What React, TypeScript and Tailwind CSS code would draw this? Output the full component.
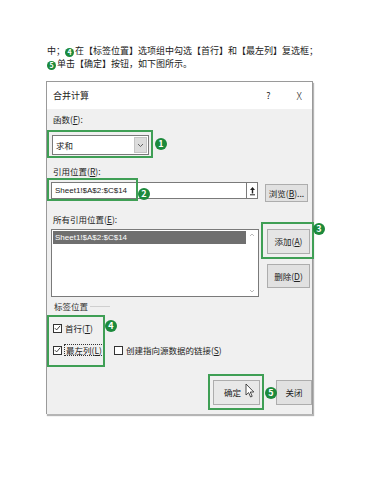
import React from "react";

const FONT = '"Noto Sans CJK SC", "Liberation Sans", sans-serif';

function Num({ n, className }: { n: string; className: string }) {
  return (
    <div
      className={`absolute w-[12px] h-[12px] rounded-full bg-[#1c8a3c] text-white text-[9px] font-bold leading-[12px] text-center ${className}`}
    >
      {n}
    </div>
  );
}

function InlineNum({ n }: { n: string }) {
  return (
    <span className="inline-block w-[9px] h-[9px] rounded-full bg-[#1c8a3c] text-white text-[7px] font-bold leading-[9px] text-center align-[-0.5px] mr-[1px]">
      {n}
    </span>
  );
}

function Check({ checked }: { checked: boolean }) {
  return (
    <div className="w-[9px] h-[9px] border border-[#333] bg-white flex items-center justify-center shrink-0">
      {checked && (
        <svg width="8" height="8" viewBox="0 0 8 8">
          <path d="M1 4.2 L3 6.2 L7 1.5" fill="none" stroke="#222" strokeWidth="1" />
        </svg>
      )}
    </div>
  );
}

function Btn({ children, className }: { children: React.ReactNode; className: string }) {
  return (
    <div
      className={`border border-[#adadad] bg-[#e1e1e1] flex items-center justify-center text-[8.5px] text-[#222] ${className}`}
    >
      {children}
    </div>
  );
}

export default function App() {
  return (
    <div className="w-[370px] h-[480px] bg-white overflow-hidden" style={{ fontFamily: FONT }}>
      <div className="pt-[44px] pl-[47px] text-[9px] leading-[13px] text-[#222] whitespace-nowrap">
        <div>
          中；<InlineNum n="4" />在【标签位置】选项组中勾选【首行】和【最左列】复选框；
        </div>
        <div>
          <InlineNum n="5" />单击【确定】按钮，如下图所示。
        </div>
      </div>

      <div className="relative mt-[11px] ml-[46px] w-[267px] h-[333px] border border-[#9a9a9a] shadow-[1px_2px_1px_#b5b5b5]">
        {/* title bar */}
        <div className="h-[27px] bg-white flex items-center pl-[6px] text-[9px] text-[#222]">
          <span>合并计算</span>
          <span className="ml-auto mr-[26px] text-[9px]">?</span>
          <span className="mr-[10px] text-[10px] font-light">X</span>
        </div>

        {/* body */}
        <div className="h-[305px] bg-[#f0f0f0] pl-[4px] text-[8.5px] text-[#222]">
          <div className="pt-[5px] h-[15px] leading-[10px] pl-[2px]">
            函数(<u>F</u>):
          </div>
          <div className="mt-[11px] ml-[1px] w-[97px] h-[20px] border border-[#7a7a7a] bg-white flex">
            <div className="flex-1 flex items-center pl-[3px]">求和</div>
            <div className="w-[13px] m-[1px] bg-[#dcdcdc] border border-[#c4c4c4] flex items-center justify-center">
              <svg width="7" height="5" viewBox="0 0 7 5">
                <path d="M1 1 L3.5 3.5 L6 1" fill="none" stroke="#555" strokeWidth="0.9" />
              </svg>
            </div>
          </div>

          <div className="mt-[11px] h-[10px] leading-[10px] pl-[2px]">
            引用位置(<u>R</u>):
          </div>
          <div className="mt-[6px] h-[20px] flex">
            <div className="w-[195px] h-[17px] bg-white border border-[#7a7a7a] border-r-0 flex items-center pl-[3px] text-[8px]" style={{ fontFamily: '"Liberation Sans", sans-serif' }}>
              Sheet1!$A$2:$C$14
            </div>
            <div className="w-[12px] h-[17px] bg-white border border-[#7a7a7a] flex items-center justify-center">
              <svg width="7" height="10" viewBox="0 0 7 10">
                <path d="M3.5 1 L6 4 H4.2 V7.5 H2.8 V4 H1 Z" fill="#222" />
                <rect x="1" y="8.3" width="5" height="1" fill="#222" />
              </svg>
            </div>
            <Btn className="ml-[7px] mt-[2px] w-[43px] h-[18px]">
              <span>
                浏览(<u>B</u>)...
              </span>
            </Btn>
          </div>

          <div className="mt-[12px] h-[10px] leading-[10px] pl-[2px]">
            所有引用位置(<u>E</u>):
          </div>
          <div className="mt-[5px] flex">
            <div className="w-[208px] h-[68px] bg-white border border-[#7a7a7a] flex p-[1px]">
              <div className="flex-1">
                <div className="h-[13px] bg-[#6f6f6f] text-white text-[8px] leading-[13px] pl-[2px]" style={{ fontFamily: '"Liberation Sans", sans-serif' }}>
                  Sheet1!$A$2:$C$14
                </div>
              </div>
              <div className="w-[11px] flex flex-col justify-between items-center py-[2px] text-[#aaa]">
                <svg width="6" height="4" viewBox="0 0 6 4">
                  <path d="M1 3 L3 1 L5 3" fill="none" stroke="#aaa" strokeWidth="0.8" />
                </svg>
                <svg width="6" height="4" viewBox="0 0 6 4">
                  <path d="M1 1 L3 3 L5 1" fill="none" stroke="#aaa" strokeWidth="0.8" />
                </svg>
              </div>
            </div>
            <div className="ml-[8px] flex flex-col gap-[10px]">
              <Btn className="w-[43px] h-[25px] bg-[#e5e5e5]">
                <span>
                  添加(<u>A</u>)
                </span>
              </Btn>
              <Btn className="w-[43px] h-[24px]">
                <span>
                  删除(<u>D</u>)
                </span>
              </Btn>
            </div>
          </div>

          <div className="mt-[4px] h-[10px] flex items-center">
            <span className="pl-[3px] leading-[10px] text-[#333]">标签位置</span>
            <div className="w-[20px] h-0 border-t border-[#cfcfcf] ml-[2px]" />
          </div>
          <div className="mt-[12px] flex items-center pl-[2px] h-[10px]">
            <Check checked />
            <span className="ml-[3px]">
              首行(<u>T</u>)
            </span>
          </div>
          <div className="mt-[12px] flex items-center pl-[2px] h-[10px]">
            <Check checked />
            <span className="ml-[2px] border border-dotted border-[#333] px-[1px] leading-[10px]">
              最左列(<u>L</u>)
            </span>
            <div className="ml-[10px]">
              <Check checked={false} />
            </div>
            <span className="ml-[3px]">
              创建指向源数据的链接(<u>S</u>)
            </span>
          </div>

          <div className="mt-[25px] flex">
            <Btn className="ml-[162px] w-[47px] h-[25px] bg-[#e8e8e8] border-[#8a8a8a]">
              <span className="mr-[8px]">确定</span>
            </Btn>
            <Btn className="ml-[16px] w-[36px] h-[25px] bg-[#dcdcdc]">
              <span>关闭</span>
            </Btn>
          </div>
        </div>

        {/* annotations */}
        <div className="absolute left-[0px] top-[48px] w-[106px] h-[28px] border-2 border-[#3f9f55]" />
        <Num n="1" className="left-[108px] top-[56px]" />
        <div className="absolute left-[0px] top-[96px] w-[91px] h-[23px] border-2 border-[#3f9f55]" />
        <Num n="2" className="left-[91px] top-[106px]" />
        <div className="absolute left-[214px] top-[140px] w-[53px] h-[37px] border-2 border-[#3f9f55]" />
        <Num n="3" className="left-[266px] top-[141px]" />
        <div className="absolute left-[0px] top-[233px] w-[58px] h-[52px] border-2 border-[#3f9f55]" />
        <Num n="4" className="left-[58px] top-[238px]" />
        <div className="absolute left-[161px] top-[292px] w-[56px] h-[36px] border-2 border-[#3f9f55]" />
        <Num n="5" className="left-[218px] top-[305px]" />

        {/* cursor */}
        <svg className="absolute left-[198px] top-[301px]" width="10" height="15" viewBox="0 0 10 15">
          <path
            d="M1 1 L1 12 L3.6 9.6 L5.6 14 L7.2 13.3 L5.3 9 L8.8 9 Z"
            fill="white"
            stroke="#222"
            strokeWidth="0.8"
            strokeLinejoin="round"
          />
        </svg>
      </div>
    </div>
  );
}
